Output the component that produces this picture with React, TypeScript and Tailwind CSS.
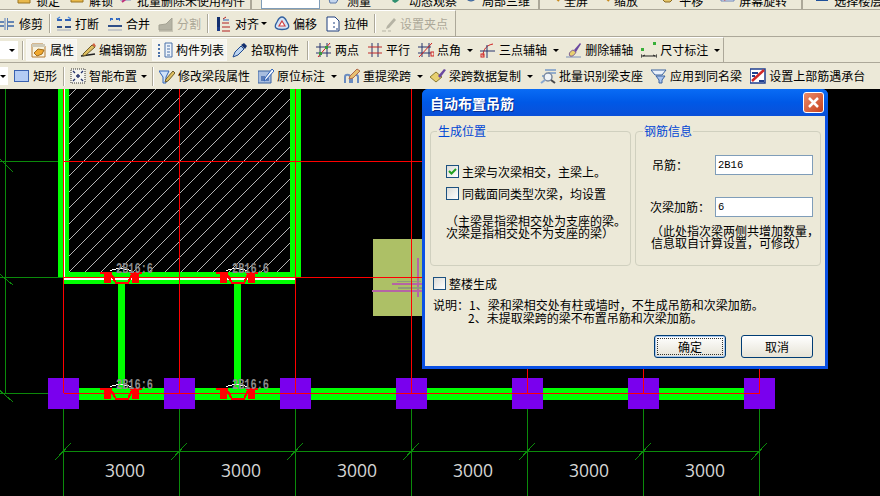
import React from "react";

const GRID_X = [63, 179, 295, 411, 527, 643, 759];
const SPANS = [125, 241, 357, 473, 589, 705];
const HATCH = Array.from({ length: 26 }, (_, i) => 165 + 16 * i);

function Ico({ name }: { name: string }) {
  const body: Record<string, React.ReactNode> = {
    lockA: <path d="M1 0h12v10H1z" fill="#e8b84a" stroke="#9a7420" />,
    lockB: <path d="M1 0h12v9H1z" fill="#e8b84a" stroke="#9a7420" />,
    batchDel: <><path d="M2 0h11v7H2z" fill="#dfe8f5" stroke="#7a8fc0" /><path d="M4 9l9-7" stroke="#c0307a" strokeWidth="2" /></>,
    ruler: <path d="M1 6l7-6h6l-6 10H2z" fill="#c5d6ee" stroke="#5a78a8" />,
    orbit: <><path d="M2 8c3-5 8-6 12-7-2 3-5 7-9 9z" fill="#2f8f6f" /><path d="M9 1h5v3z" fill="#8fb7d8" /></>,
    local: <><circle cx="8" cy="2" r="6" fill="#6c9ed8" stroke="#31588f" /><path d="M2 3h12" stroke="#fff" /></>,
    full: <><circle cx="7" cy="1" r="5" fill="#dde6f2" stroke="#31588f" /><path d="M10 4l4 4" stroke="#c98a1c" strokeWidth="2" /></>,
    zoom: <><circle cx="7" cy="1" r="5" fill="#eef2f8" stroke="#7a7a7a" /><path d="M10 4l4 4" stroke="#c98a1c" strokeWidth="2" /></>,
    pan: <path d="M2 2h11v4l-3 3H5L2 6z" fill="#e6c66a" stroke="#8a6a20" />,
    rotate: <><path d="M1 0h13v8H1z" fill="#e8eef8" stroke="#6f86b8" /><path d="M4 7l6-4" stroke="#d03030" strokeWidth="2" /></>,
    floor: <path d="M1 1h12M1 4h12M1 7h12" stroke="#1e4f9a" strokeWidth="2" />,
    trim: <><path d="M0 6h4M0 10h4M8 6h6M8 10h6" stroke="#3a66a8" strokeWidth="1.5" /><path d="M5 2v12M7.500 2v12" stroke="#5a7fb8" /></>,
    brk: <><path d="M1 4h5M9 4h6" stroke="#2f62b8" strokeWidth="2" /><path d="M1 3l3-2M15 3l-3-2" stroke="#4a86d8" strokeWidth="1.5" /><path d="M1 11h5M9 11h6" stroke="#2f4f88" strokeWidth="2" /><path d="M1 14h14" stroke="#a0a8b8" /></>,
    merge: <><path d="M3 3h3M9 3h4" stroke="#2f62b8" strokeWidth="2" /><path d="M3 5l3-3M13 5l-3-3" stroke="#4a86d8" /><path d="M1 10h14" stroke="#2f4f88" strokeWidth="2" /><path d="M1 14h14" stroke="#a0a8b8" /></>,
    split: <path d="M1 9l7-1 6-6v12H1zM1 15h14" fill="#b5b3a4" stroke="#a5a394" />,
    align: <><path d="M1 1h3v14H1z" fill="#14306e" /><path d="M1 11h3v4H1z" fill="#1a3a88" /><path d="M7 3l3-2M6 7h7M6 11h8M6 15h8" stroke="#b02020" /><path d="M7 4h6" stroke="#2f62b8" /></>,
    offset: <><path d="M8 1c3 0 4 3 5 5s3 4 1 6-10 2-12 0 0-4 1-6 2-5 5-5z" fill="#d5e4f6" stroke="#315f9f" strokeWidth="1.3" /><path d="M8 5l3 5H5z" fill="#fff" stroke="#d04040" strokeWidth="1.2" /></>,
    stretch: <><path d="M2 1h8l4 4v10H2z" fill="#fff" stroke="#1f3f7f" /><path d="M9 6v2M9 10v2M11 13h2" stroke="#1f3f7f" /></>,
    grip: <><path d="M6 10l7-8 2 2-7 8-3 1z" fill="#b5b3a4" /><path d="M1 15h4M7 15h3" stroke="#b5b3a4" /></>,
    prop: <><path d="M1 2h11l2 2v11H1z" fill="#f8f2de" stroke="#b47a30" /><path d="M1 2h13v3H1z" fill="#cfcab8" /><path d="M3 11l4-4 6 1-2 4-5 2z" fill="#f0a830" stroke="#a06a18" /></>,
    edit: <><path d="M1 14l14-2" stroke="#202020" strokeWidth="1.4" /><path d="M3 12L12 3l3 2-9 8-3 1z" fill="#e0c060" stroke="#6a5a28" /><path d="M12 3l2-2 2 3-1 1z" fill="#d06040" /></>,
    list: <><path d="M1 3h3M1 7h3M1 11h3M1 14h3" stroke="#4a70a8" strokeWidth="2" strokeDasharray="2 1" /><path d="M8 1h7v14H8z" fill="#eef4fb" stroke="#4a70a8" /><path d="M10 4h3M10 7h3M10 10h3M10 13h3" stroke="#4a70a8" /></>,
    pick: <><path d="M1 15l2-5 6-6 3 3-6 6z" fill="#bcd4f0" stroke="#204a90" /><path d="M9 3l3-2 3 3-2 3z" fill="#14306e" /></>,
    two: <><path d="M4 1v14M11 1v14M0 5h15M0 11h15" stroke="#26346e" /><path d="M2 15L14 1" stroke="#d02020" /><rect x="3" y="10" width="3" height="3" fill="#3a9a3a" /><rect x="9" y="4" width="3" height="3" fill="#3a9a3a" /></>,
    par: <><path d="M5 1v14M11 1v14" stroke="#26346e" /><path d="M1 5h14M1 11h14" stroke="#c02828" /></>,
    ang: <><path d="M4 1v14M11 1v14M0 5h13M0 11h13" stroke="#26346e" /><path d="M1 15L14 1" stroke="#d02020" /><rect x="13" y="10" width="3" height="4" fill="none" stroke="#d02020" /></>,
    arc: <><path d="M3 14C3 7 7 3 13 2" fill="none" stroke="#d02020" /><path d="M0 9h15M7 3v13" stroke="#26346e" /><rect x="1" y="12" width="3" height="3" fill="none" stroke="#d02020" /></>,
    del: <><path d="M0 15h15" stroke="#7a90b8" /><path d="M4 14c-2-3 1-5 3-6l3 2c-1 2-3 5-6 4z" fill="#e8d070" stroke="#7a5a90" /><path d="M8 8l6-7 1 1-5 8z" fill="#6a48a0" /></>,
    dim: <><path d="M0 12v4M16 12v4M0 14h16" stroke="#202020" /><path d="M2 14l2-1M14 14l-2-1" stroke="#202020" /><rect x="0" y="6" width="3" height="3" fill="#38b038" /><rect x="12" y="0" width="3" height="3" fill="#38b038" /></>,
    rect: <rect x="0.5" y="2.5" width="14" height="11" fill="#b4ccf4" stroke="#3a62b0" />,
    smart: <><path d="M1 1h14v14H1z" fill="#f4f4ee" stroke="#333" strokeDasharray="1 1" /><path d="M5 5l-2-2M11 5l2-2M5 11l-2 2M11 11l2 2M8 6v4M6 8h4" stroke="#26346e" strokeWidth="1.4" /></>,
    funnel: <><path d="M0 3h10L7 9v6H4V9z" fill="#cfe2f8" stroke="#2f62b8" /><path d="M7 11l7-8 2 2-7 8-3 1z" fill="#e0c060" stroke="#6a5a28" /></>,
    mark: <><path d="M0 3h13v12H0z" fill="#a7bddf" stroke="#3a62a0" /><path d="M3 8h4v5H3zM8 10h3v3H8z" fill="#5a7cb8" /><path d="M7 10l7-9 2 2-8 9-2 1z" fill="#f4f8ff" stroke="#2f62b8" /></>,
    span: <><path d="M1 15V9c0-3 5-3 5 0v6M8 15V9c0-3 6-3 6 0v6" fill="none" stroke="#6a8cc0" strokeWidth="2" /><path d="M6 8l7-7 3 2-7 7-4 1z" fill="#e8c070" stroke="#b06a4a" /></>,
    copy: <><path d="M0 9l6-5 6 5-6 5z" fill="#e8d070" stroke="#8a7a30" /><path d="M8 8l6-7 2 1-6 8z" fill="#6a48a0" /></>,
    batch: <><path d="M5 2h11M8 5h8M2 8h6" stroke="#3a70c0" /><circle cx="8" cy="9" r="4" fill="#f0f4f8" stroke="#7a8aa0" strokeWidth="1.5" /><path d="M11 12l4 3" stroke="#4a4a4a" strokeWidth="2" /><path d="M1 15l4-3" stroke="#8aa8d0" strokeWidth="2" /></>,
    apply: <><path d="M0 2h15l-4 5H4z" fill="#e8f0fa" stroke="#3a62a0" /><path d="M5 8h9l-3 4v3H8v-3z" fill="#a9c4f0" stroke="#3a62a0" /></>,
    top: <><path d="M0 1h15v14H0z" fill="#fff" stroke="#1f3f8f" strokeWidth="1.5" /><path d="M2 5h6M2 8h3" stroke="#1f3f8f" strokeWidth="2" /><path d="M2 13L14 2" stroke="#d02828" strokeWidth="2.5" /><path d="M9 12h5v2H9z" fill="#1f3f8f" /></>,
  };
  return (
    <svg viewBox="0 0 16 16" className="w-[16px] h-[16px] shrink-0">
      {body[name]}
    </svg>
  );
}

function Caret({ className = "ml-[6px] mr-[7px]" }: { className?: string }) {
  return <span className={`w-0 h-0 shrink-0 border-x-[3px] border-x-transparent border-t-[3px] border-t-black ${className}`} />;
}

type ToolProps = {
  icon: string;
  label: string;
  caret?: string | boolean;
  off?: boolean;
  on?: boolean;
  mr?: string;
  className?: string;
};

function Tool({ icon, label, caret, off, on, mr = "mr-[8px]", className }: ToolProps) {
  return (
    <div className={`flex items-center shrink-0 ${caret ? "" : mr} ${on ? "h-[22px] pl-[4px] pr-[2px] bg-[#f6f5ef] border border-[#f9f8f4]" : ""} ${className ?? ""}`}>
      <Ico name={icon} />
      <span className={`ml-[3px] whitespace-nowrap ${off ? "text-[#aca899]" : "text-black"}`}>{label}</span>
      {caret && <Caret className={typeof caret === "string" ? caret : undefined} />}
    </div>
  );
}

function Sep({ className = "-ml-[2px] mr-[5px]" }: { className?: string }) {
  return <div className={`w-[2px] h-[19px] shrink-0 border-l border-l-[#aca899] border-r border-r-white ${className}`} />;
}

function Check({ checked, className }: { checked?: boolean; className?: string }) {
  return (
    <span className={`w-[13px] h-[13px] shrink-0 border border-[#1c5180] bg-linear-to-br from-[#dcdcd7] to-white flex items-center justify-center ${className ?? ""}`}>
      {checked && (
        <svg viewBox="0 0 11 11" className="w-[11px] h-[11px]">
          <path d="M2 5l2.500 2.500L9 3" fill="none" stroke="#21a121" strokeWidth="2" />
        </svg>
      )}
    </span>
  );
}

function Hanger({ cx, y, h }: { cx: number; y: number; h: number }) {
  return (
    <g>
      <path d={`M${cx - 11} ${y - 1}C${cx - 7} ${y - 4} ${cx + 5} ${y - 4} ${cx + 10} ${y - 1}`} fill="none" stroke="#fff" />
      <path d={`M${cx - 21} ${y}H${cx - 9}V${y + 2}H${cx - 10}V${y + h}H${cx - 17}V${y + 2}H${cx - 21}Z`} fill="#f00" />
      <path d={`M${cx + 9} ${y}H${cx + 21}V${y + 2}H${cx + 18}V${y + h}H${cx + 11}V${y + 2}H${cx + 9}Z`} fill="#f00" />
      <path d={`M${cx - 10} ${y + 2}L${cx - 5} ${y + h}H${cx + 7}L${cx + 11} ${y + 2}`} fill="none" stroke="#f00" strokeWidth="2" />
      <text x={cx - 5} y={y + 1} textLength={37} lengthAdjust="spacingAndGlyphs" className="font-['Liberation_Mono'] font-bold text-[14px] fill-[#8c8c8c]">2B16:6</text>
    </g>
  );
}

function Drawing() {
  return (
    <svg viewBox="0 89 880 407" className="absolute inset-0 w-[880px] h-[407px]" shapeRendering="crispEdges">
      <defs>
        <clipPath id="hatch">
          <rect x="69" y="89" width="221" height="183" />
        </clipPath>
      </defs>
      <g clipPath="url(#hatch)" stroke="#b4b4b4">
        {HATCH.map((c) => (
          <line key={c} x1={c - 89} y1="89" x2={c - 272} y2="272" />
        ))}
      </g>

      {/* axis lines */}
      <g stroke="#0b8a0b" fill="none">
        <path d="M5.500 89V393M0 161.500H64M0 277.500H64M0 393.500H64M-3 156L13 172M-3 272L13 285M-3 388L13 402" />
        {GRID_X.map((x) => (
          <g key={x}>
            <path d={`M${x + 0.5} 393V496`} />
            <path d={`M${x - 8} 460L${x + 8} 443`} />
          </g>
        ))}
        <path d="M63 451.500H760" />
      </g>

      {/* beams */}
      <g fill="#0f0">
        <rect x="58" y="89" width="11" height="188" />
        <rect x="290" y="89" width="11" height="188" />
        <rect x="64" y="272" width="231" height="12" />
        <rect x="118" y="284" width="7" height="104" />
        <rect x="234" y="284" width="7" height="104" />
        <rect x="79" y="388" width="666" height="12" />
      </g>
      <g fill="#fff">
        <rect x="64" y="89" width="1" height="190" />
        <rect x="295" y="89" width="1" height="190" />
        <rect x="64" y="278" width="231" height="2" />
      </g>

      <rect x="373" y="239" width="50" height="77" fill="#adc066" />
      <g fill="#b565a5">
        <rect x="417" y="258" width="2" height="39" />
        <rect x="392" y="283" width="31" height="2" />
        <rect x="372" y="290" width="51" height="2" />
      </g>
      <g fill="#8f9c78">
        <rect x="397" y="281" width="24" height="1" />
        <rect x="398" y="287" width="24" height="2" />
      </g>

      {GRID_X.map((x) => (
        <rect key={x} x={x - 15} y="378" width="31" height="31" fill="#7a00ee" />
      ))}

      {/* red centre lines */}
      <g stroke="#f00" fill="none">
        <path d="M64 161.500H423M64 277.500H423M64 393.500H760" />
        {GRID_X.map((x) => (
          <path key={x} d={`M${x + 0.5} 89V393`} />
        ))}
      </g>

      {[121, 237].map((cx) => (
        <g key={cx}>
          <Hanger cx={cx} y={272} h={11} />
          <Hanger cx={cx} y={388} h={11} />
        </g>
      ))}

      {SPANS.map((x) => (
        <text key={x} x={x} y="477" textAnchor="middle" className="font-['Open_Sans'] text-[17.500px] fill-[#d6d6d6]">3000</text>
      ))}
    </svg>
  );
}

function Dialog() {
  return (
    <div className="absolute left-[422px] top-0 w-[406px] h-[280px] flex flex-col rounded-t-[6px] bg-[#0a50e4] px-[3px] pb-[3px]">
      <div className="h-[27px] shrink-0 -mx-[3px] rounded-t-[6px] bg-linear-to-b from-[#0a6cf5] via-[#0058e6] to-[#0a50d8] flex items-center justify-between pl-[8px] pr-[4px]">
        <span className="text-white font-bold text-[14px] [text-shadow:1px_1px_0_#0a2f90]">自动布置吊筋</span>
        <button className="w-[21px] h-[21px] rounded-[3px] border border-white bg-linear-to-br from-[#e88a68] to-[#c8401a] flex items-center justify-center">
          <svg viewBox="0 0 13 13" className="w-[13px] h-[13px]">
            <path d="M2 2l9 9M11 2l-9 9" stroke="#fff" strokeWidth="2.500" />
          </svg>
        </button>
      </div>

      <div className="flex-1 bg-[#ece9d8] pl-[5px] pr-[4px] pt-[15px] text-[12px] leading-[12px] text-black">
        <div className="flex gap-[4px]">
          <div className="relative w-[201px] h-[135px] shrink-0 border border-[#d0d0bf] rounded-[4px] pt-[33px] pl-[15px]">
            <span className="absolute left-[6px] -top-[7px] px-px bg-[#ece9d8] text-[#0046d5]">生成位置</span>
            <label className="flex items-center">
              <Check checked />
              <span className="ml-[3px]">主梁与次梁相交，主梁上。</span>
            </label>
            <label className="flex items-center mt-[9px]">
              <Check />
              <span className="ml-[3px]">同截面同类型次梁，均设置</span>
            </label>
            <p className="mt-[15px] whitespace-nowrap">
              （主梁是指梁相交处为支座的梁。
              <br />
              次梁是指相交处不为支座的梁）
            </p>
          </div>

          <div className="relative w-[186px] h-[135px] shrink-0 border border-[#d0d0bf] rounded-[4px] pt-[23px] pl-[15px] pr-[7px]">
            <span className="absolute left-[7px] -top-[7px] px-px bg-[#ece9d8] text-[#0046d5]">钢筋信息</span>
            <div className="flex items-center justify-between">
              <span className="ml-px">吊筋：</span>
              <input readOnly value="2B16" className="w-[98px] h-[20px] border border-[#7f9db9] bg-white px-[2px] text-[10.500px] font-['Liberation_Mono'] outline-none" />
            </div>
            <div className="flex items-center justify-between mt-[22px]">
              <span className="-ml-px">次梁加筋：</span>
              <input readOnly value="6" className="w-[98px] h-[20px] border border-[#7f9db9] bg-white px-[2px] text-[10.500px] font-['Liberation_Mono'] outline-none" />
            </div>
            <p className="mt-[8px] whitespace-nowrap">
              （此处指次梁两侧共增加数量，
              <br />
              信息取自计算设置，可修改）
            </p>
          </div>
        </div>

        <label className="flex items-center mt-[11px] ml-[3px]">
          <Check />
          <span className="ml-[3px]">整楼生成</span>
        </label>

        <div className="mt-[8px] ml-[3px] leading-[13px] whitespace-nowrap">
          <div>说明：1、梁和梁相交处有柱或墙时，不生成吊筋和次梁加筋。</div>
          <div className="pl-[35px]">2、未提取梁跨的梁不布置吊筋和次梁加筋。</div>
        </div>

        <div className="flex justify-end gap-[15px] mt-[11px] pr-[8px]">
          <button className="w-[72px] h-[23px] p-[2px] rounded-[3px] border border-[#003c74] bg-linear-to-b from-white to-[#e6e3d6] shadow-[inset_0_0_0_1px_#a9c8ee]">
            <span className="w-full h-full border border-dotted border-[#333] flex items-center justify-center">确定</span>
          </button>
          <button className="w-[72px] h-[23px] rounded-[3px] border border-[#003c74] bg-linear-to-b from-white to-[#e6e3d6] flex items-center justify-center">取消</button>
        </div>
      </div>
    </div>
  );
}

export default function App() {
  return (
    <div className="w-[880px] h-[496px] overflow-hidden bg-black flex flex-col font-['Noto_Sans_CJK_SC',sans-serif] text-[12px] leading-[12px]">
      {/* top row is cut off by the crop */}
      <div className="h-[10px] shrink-0 bg-[#ece9d8] border-b border-b-[#aca899] flex items-end overflow-hidden pl-[17px]">
        <Tool icon="lockA" label="锁定" mr="mr-[10px]" />
        <Tool icon="lockB" label="解锁" mr="mr-[5px]" />
        <Tool icon="batchDel" label="批量删除未使用构件" mr="mr-[5px]" />
        <div className="w-[2px] h-[19px] shrink-0 bg-[#aca899] mr-[9px]" />
        <div className="w-[59px] h-[16px] shrink-0 bg-white border border-[#7f9db9] mr-[8px]" />
        <Tool icon="ruler" label="测量" mr="mr-[19px]" />
        <Tool icon="orbit" label="动态观察" mr="mr-[6px]" />
        <Tool icon="local" label="局部三维" mr="mr-[8px]" />
        <div className="w-[2px] h-[19px] shrink-0 bg-[#aca899] mr-[5px]" />
        <Tool icon="full" label="全屏" mr="mr-[7px]" />
        <Tool icon="zoom" label="缩放" mr="mr-[22px]" />
        <Tool icon="pan" label="平移" mr="mr-[17px]" />
        <Tool icon="rotate" label="屏幕旋转" mr="mr-[14px]" />
        <div className="w-[2px] h-[19px] shrink-0 bg-[#aca899] mr-[12px]" />
        <Tool icon="floor" label="选择楼层" />
      </div>

      <div className="h-[27px] shrink-0 bg-[#ece9d8] border-b border-b-[#aca899]">
        <div className="w-[456px] h-full flex items-center overflow-hidden border-r border-r-[#aca899] border-t border-t-white">
          <Tool icon="trim" label="修剪" />
          <Sep />
          <Tool icon="brk" label="打断" />
          <Tool icon="merge" label="合并" />
          <Tool icon="split" label="分割" off />
          <Sep className="-ml-[2px] mr-[7px]" />
          <Tool icon="align" label="对齐" caret="ml-[2px] mr-[7px]" />
          <Tool icon="offset" label="偏移" />
          <Tool icon="stretch" label="拉伸" />
          <Sep />
          <Tool icon="grip" label="设置夹点" off />
        </div>
      </div>

      <div className="h-[26px] shrink-0 bg-[#ece9d8] border-b border-b-[#aca899]">
        <div className="w-[724px] h-full flex items-center overflow-hidden border-r border-r-[#aca899] border-t border-t-white">
          <div className="w-[18px] h-[18px] shrink-0 bg-white flex items-center justify-end pr-[3px]">
            <Caret className="" />
          </div>
          <Sep className="ml-[4px] mr-[2px]" />
          <Tool icon="prop" label="属性" on mr="mr-[3px]" />
          <Tool icon="edit" label="编辑钢筋" mr="mr-[5px]" />
          <Tool icon="list" label="构件列表" on mr="mr-[5px]" />
          <Tool icon="pick" label="拾取构件" />
          <Sep className="mr-[7px]" />
          <Tool icon="two" label="两点" />
          <Tool icon="par" label="平行" />
          <Tool icon="ang" label="点角" caret />
          <Tool icon="arc" label="三点辅轴" caret />
          <Tool icon="del" label="删除辅轴" />
          <Tool icon="dim" label="尺寸标注" caret />
        </div>
      </div>

      <div className="h-[26px] shrink-0 bg-[#ece9d8] flex items-center overflow-hidden whitespace-nowrap">
        <div className="w-[8px] h-[18px] shrink-0 bg-white flex items-center mr-[6px]">
          <Caret className="" />
        </div>
        <Tool icon="rect" label="矩形" />
        <Sep />
        <Tool icon="smart" label="智能布置" caret="ml-[4px] mr-[7px]" />
        <Sep />
        <Tool icon="funnel" label="修改梁段属性" />
        <Tool icon="mark" label="原位标注" caret />
        <Tool icon="span" label="重提梁跨" caret />
        <Tool icon="copy" label="梁跨数据复制" caret />
        <Tool icon="batch" label="批量识别梁支座" />
        <Tool icon="apply" label="应用到同名梁" />
        <Tool icon="top" label="设置上部筋遇承台" />
      </div>

      <div className="relative flex-1">
        <Drawing />
        <Dialog />
      </div>
    </div>
  );
}
